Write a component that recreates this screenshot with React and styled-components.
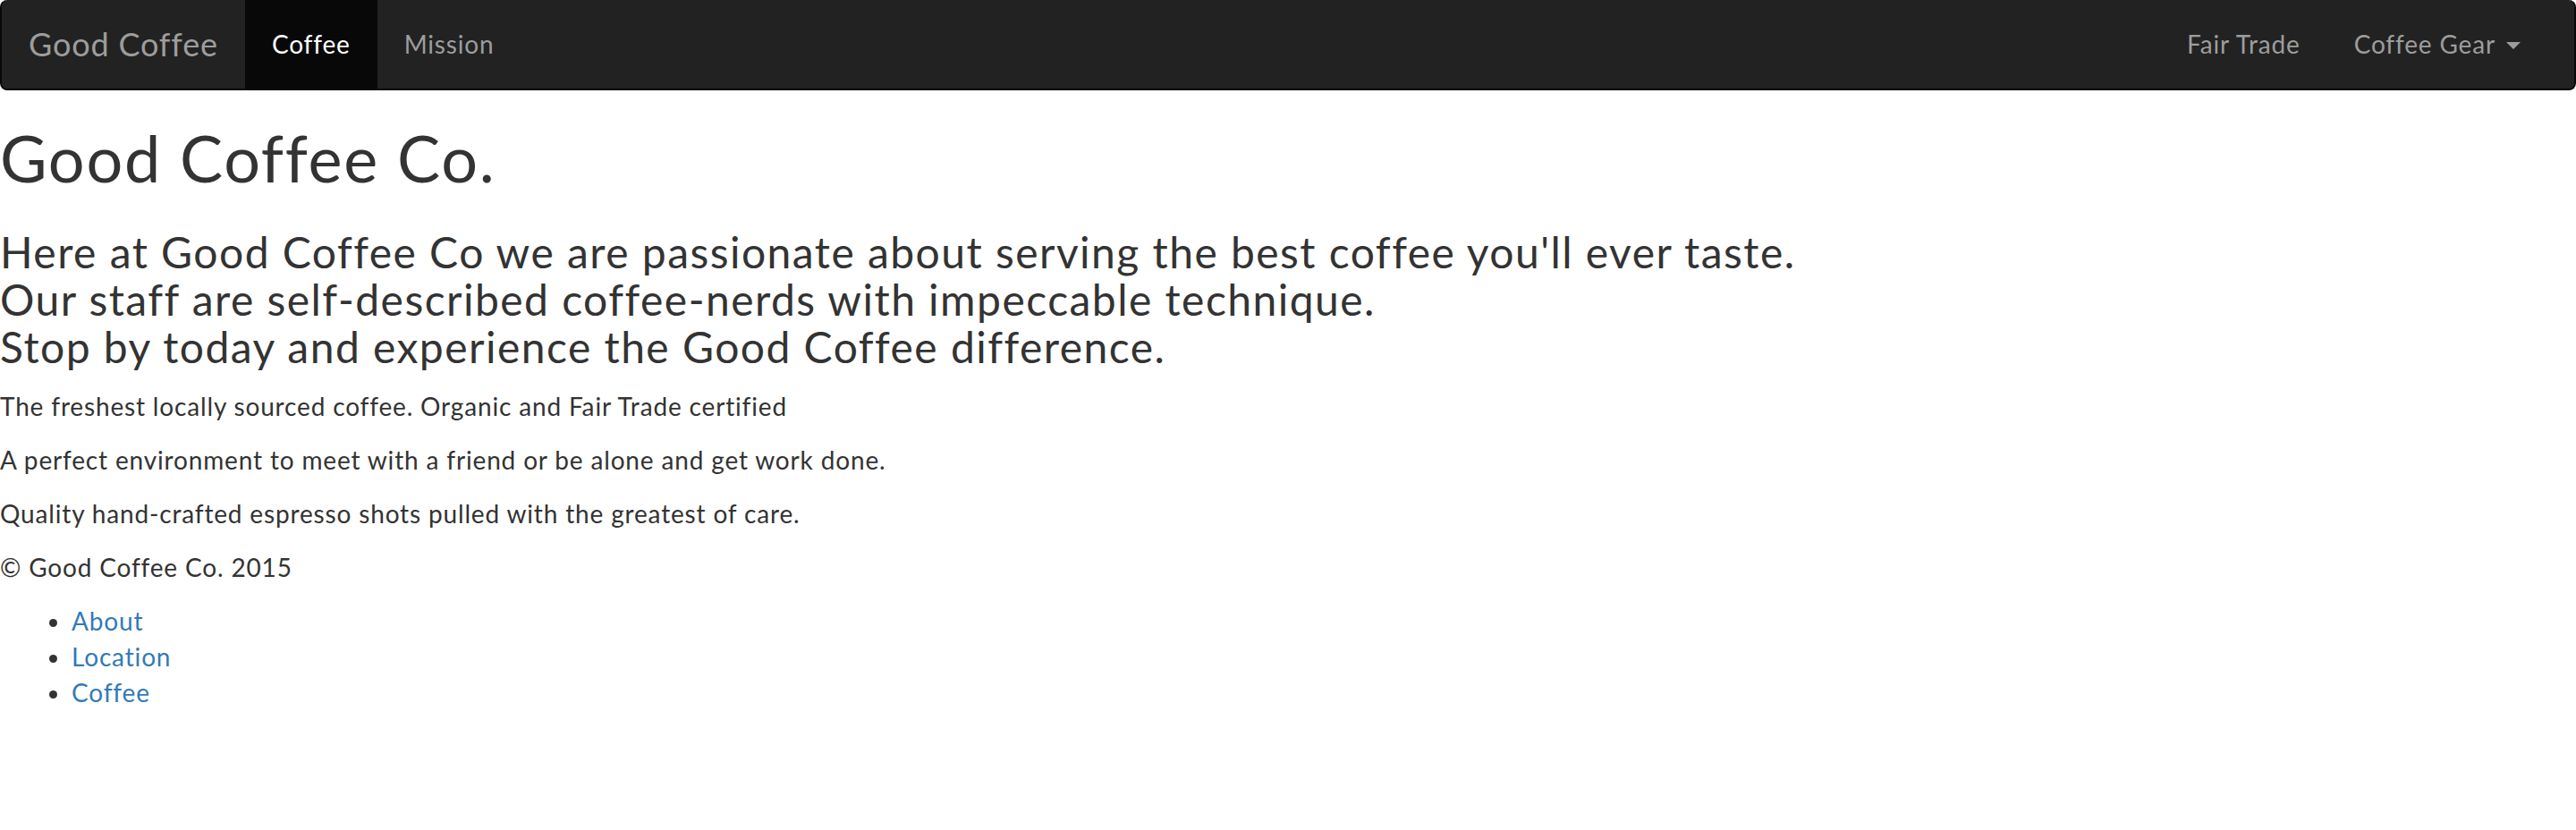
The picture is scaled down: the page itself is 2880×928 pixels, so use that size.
import React from "react";
import styled, { createGlobalStyle } from "styled-components";

const Global = createGlobalStyle`
  * { box-sizing: border-box; }
  html, body { margin: 0; padding: 0; background: #fff; }
  body {
    font-family: "Lato", "Open Sans", sans-serif;
    font-size: 28px;
    line-height: 40px;
    letter-spacing: 0.84px;
    color: #333;
  }
`;

const Navbar = styled.nav`
  display: flex;
  align-items: stretch;
  justify-content: space-between;
  height: 101px;
  background: #222;
  border: 2px solid #080808;
  border-top-width: 0;
  border-radius: 8px;
  padding: 0 30px;
`;

const NavGroup = styled.ul`
  display: flex;
  align-items: stretch;
  list-style: none;
  margin: 0;
  padding: 0;
`;

const NavItem = styled.li`
  display: flex;
`;

const Brand = styled.a`
  display: flex;
  align-items: center;
  padding: 0 30px 2px 0;
  font-size: 36px;
  color: #9d9d9d;
  text-decoration: none;
`;

const NavLink = styled.a`
  display: flex;
  align-items: center;
  padding: 0 30px 2px;
  font-size: 28px;
  color: ${(p) => (p.$active ? "#fff" : "#9d9d9d")};
  background: ${(p) => (p.$active ? "#080808" : "transparent")};
  text-decoration: none;
`;

const Caret = styled.span`
  display: inline-block;
  width: 0;
  height: 0;
  margin-left: 12px;
  margin-top: 4px;
  border-top: 8px solid #9d9d9d;
  border-left: 8px solid transparent;
  border-right: 8px solid transparent;
`;

const Main = styled.main`
  padding: 36px 0 0;
`;

const Title = styled.h1`
  margin: 0 0 40px;
  font-size: 72px;
  line-height: 79px;
  font-weight: 400;
  letter-spacing: 1.7px;
`;

const Lead = styled.h3`
  margin: 0 0 20px;
  font-size: 48px;
  line-height: 52.8px;
  font-weight: 400;
  letter-spacing: 1.46px;
`;

const Para = styled.p`
  margin: 0 0 20px;
`;

const Links = styled.ul`
  margin: 0 0 20px;
  padding-left: 80px;
`;

const LinkItem = styled.a`
  color: #337ab7;
  text-decoration: none;
`;

export default function App() {
  return (
    <>
      <Global />
      <Navbar>
        <NavGroup>
          <NavItem>
            <Brand href="#">Good Coffee</Brand>
          </NavItem>
          <NavItem>
            <NavLink href="#" $active>Coffee</NavLink>
          </NavItem>
          <NavItem>
            <NavLink href="#">Mission</NavLink>
          </NavItem>
        </NavGroup>
        <NavGroup>
          <NavItem>
            <NavLink href="#">Fair Trade</NavLink>
          </NavItem>
          <NavItem>
            <NavLink href="#">
              Coffee Gear
              <Caret />
            </NavLink>
          </NavItem>
        </NavGroup>
      </Navbar>
      <Main>
        <Title>Good Coffee Co.</Title>
        <Lead>
          Here at Good Coffee Co we are passionate about serving the best coffee you'll ever taste.
          <br />
          Our staff are self-described coffee-nerds with impeccable technique.
          <br />
          Stop by today and experience the Good Coffee difference.
        </Lead>
        <Para>The freshest locally sourced coffee. Organic and Fair Trade certified</Para>
        <Para>A perfect environment to meet with a friend or be alone and get work done.</Para>
        <Para>Quality hand-crafted espresso shots pulled with the greatest of care.</Para>
        <footer>
          <Para>© Good Coffee Co. 2015</Para>
          <Links>
            <li><LinkItem href="#">About</LinkItem></li>
            <li><LinkItem href="#">Location</LinkItem></li>
            <li><LinkItem href="#">Coffee</LinkItem></li>
          </Links>
        </footer>
      </Main>
    </>
  );
}
